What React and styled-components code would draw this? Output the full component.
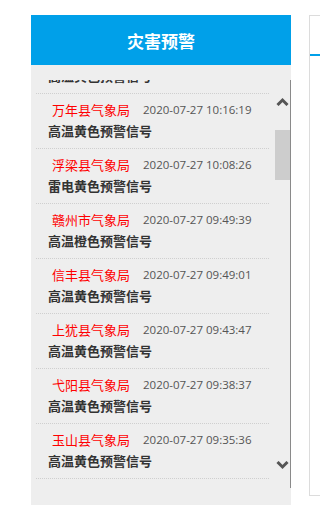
import React, { useLayoutEffect, useRef } from "react";
import styled, { createGlobalStyle } from "styled-components";

const Global = createGlobalStyle`
  html, body { margin: 0; padding: 0; background: #fff; }
  body { font-family: "Noto Sans CJK SC", "Microsoft YaHei", sans-serif; }
  * { box-sizing: border-box; }
`;

const Page = styled.div`
  display: flex;
  align-items: flex-start;
  gap: 18px;
  padding: 15px 0 0 31px;
  width: 320px;
  height: 505px;
  overflow: hidden;
`;

const Panel = styled.section`
  flex: 0 0 260px;
  display: flex;
  flex-direction: column;
  height: 490px;
  background: #eeeeee;
`;

const Header = styled.header`
  height: 50px;
  flex: 0 0 50px;
  background: #00a0e9;
  color: #fff;
  display: flex;
  align-items: center;
  justify-content: center;
  font-size: 17px;
  font-weight: 700;
`;

const Body = styled.div`
  padding-top: 15px;
`;

const ListFrame = styled.div`
  display: flex;
  height: 408px;
  border-right: 1px solid #8a8a8a;
`;

const List = styled.ul`
  flex: 1;
  margin: 0;
  padding: 0 5px 30px;
  list-style: none;
  overflow-y: scroll;
  scrollbar-width: none;
  &::-webkit-scrollbar { display: none; }
`;

const Item = styled.li`
  height: 55px;
  padding: 6px 0 6px;
  border-bottom: 1px dotted #cfcfcf;
`;

const Meta = styled.div`
  display: flex;
  align-items: center;
  height: 20px;
  padding-left: 16px;
  gap: 13px;
`;

const Source = styled.span`
  color: #ff0000;
  font-size: 13px;
  line-height: 20px;
`;

const Time = styled.span`
  color: #555;
  font-family: "Open Sans", "Liberation Sans", sans-serif;
  font-size: 11.5px;
  line-height: 20px;
`;

const Title = styled.div`
  height: 22px;
  line-height: 22px;
  padding-left: 12px;
  color: #333;
  font-size: 13px;
  font-weight: 700;
`;

const ScrollBar = styled.div`
  flex: 0 0 16px;
  display: flex;
  flex-direction: column;
  background: #eeeeee;
`;

const Arrow = styled.div`
  flex: 0 0 ${(p) => p.$h}px;
  display: flex;
  justify-content: center;
  align-items: ${(p) => (p.$up ? "flex-end" : "flex-start")};
  padding: ${(p) => (p.$up ? "0 0 16px" : "19px 0 0")};
`;

const Track = styled.div`
  flex: 1;
  padding-top: 8px;
`;

const Thumb = styled.div`
  height: 50px;
  width: 15px;
  margin-left: 1px;
  background: #cdcdcd;
`;

const Side = styled.section`
  flex: 0 0 200px;
  height: 481px;
  border: 1px solid #dcdcdc;
  padding-top: 38px;
`;

const Tab = styled.div`
  height: 2px;
  background: #00a0e9;
  width: 100%;
`;

const items = [
  ["乐平市气象局", "2020-07-27 10:20:05", "高温黄色预警信号"],
  ["万年县气象局", "2020-07-27 10:16:19", "高温黄色预警信号"],
  ["浮梁县气象局", "2020-07-27 10:08:26", "雷电黄色预警信号"],
  ["赣州市气象局", "2020-07-27 09:49:39", "高温橙色预警信号"],
  ["信丰县气象局", "2020-07-27 09:49:01", "高温黄色预警信号"],
  ["上犹县气象局", "2020-07-27 09:43:47", "高温黄色预警信号"],
  ["弋阳县气象局", "2020-07-27 09:38:37", "高温黄色预警信号"],
  ["玉山县气象局", "2020-07-27 09:35:36", "高温黄色预警信号"],
];

const Chevron = ({ up }) => (
  <svg width="13" height="9" viewBox="0 0 13 9">
    <polyline
      points={up ? "1.5,8 6.5,3 11.5,8" : "1.5,1 6.5,6 11.5,1"}
      fill="none"
      stroke="#555"
      strokeWidth="3"
    />
  </svg>
);

export default function App() {
  const ref = useRef(null);
  useLayoutEffect(() => {
    if (ref.current) ref.current.scrollTop = 41;
  }, []);
  return (
    <>
      <Global />
      <Page>
        <Panel>
          <Header>灾害预警</Header>
          <Body>
            <ListFrame>
              <List ref={ref}>
                {items.map(([s, t, title], i) => (
                  <Item key={i}>
                    <Meta>
                      <Source>{s}</Source>
                      <Time>{t}</Time>
                    </Meta>
                    <Title>{title}</Title>
                  </Item>
                ))}
              </List>
              <ScrollBar>
                <Arrow $up $h={42}>
                  <Chevron up />
                </Arrow>
                <Track>
                  <Thumb />
                </Track>
                <Arrow $h={46}>
                  <Chevron />
                </Arrow>
              </ScrollBar>
            </ListFrame>
          </Body>
        </Panel>
        <Side>
          <Tab />
        </Side>
      </Page>
    </>
  );
}
